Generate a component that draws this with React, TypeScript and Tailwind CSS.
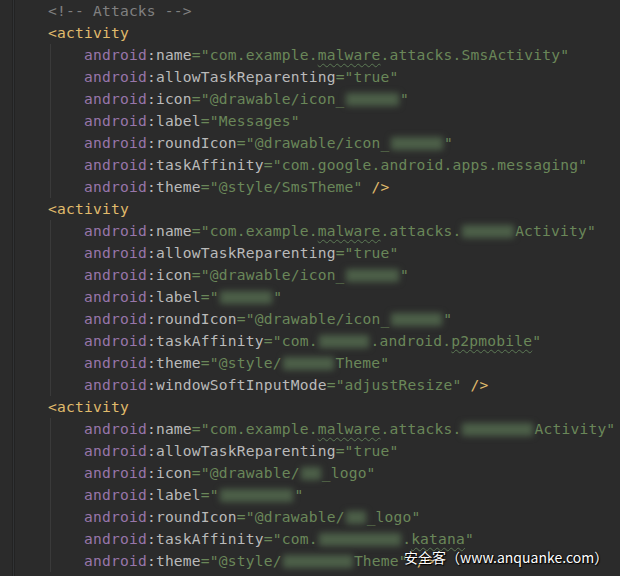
import React from 'react';

type Kind = 'ns' | 'attr' | 'str' | 'typo' | 'tag' | 'blob' | 'sp';
type Tok = [Kind, string | number];
type Line = Tok[];

const colors: Record<string, string> = {
  ns: 'text-[#9876aa]',
  attr: 'text-[#bababa]',
  str: 'text-[#6a8759]',
  tag: 'text-[#e0bb6c]',
};

// attribute line helper: android:<name>=<value tokens>
const at = (name: string, ...rest: Tok[]): Line => [
  ['ns', 'android'],
  ['attr', ':' + name],
  ...rest,
];

const close: Tok[] = [['sp', ' '], ['tag', '/>']];

// blob widths are in characters (8.8px each), the redacted bits of the screenshot
const blocks: Line[][] = [
  [
    at('name', ['str', '="com.example.'], ['typo', 'malware'], ['str', '.attacks.SmsActivity"']),
    at('allowTaskReparenting', ['str', '="true"']),
    at('icon', ['str', '="@drawable/icon_'], ['blob', 6.3], ['str', '"']),
    at('label', ['str', '="Messages"']),
    at('roundIcon', ['str', '="@drawable/icon_'], ['blob', 6.2], ['str', '"']),
    at('taskAffinity', ['str', '="com.google.android.apps.messaging"']),
    at('theme', ['str', '="@style/SmsTheme"'], ...close),
  ],
  [
    at('name', ['str', '="com.example.'], ['typo', 'malware'], ['str', '.attacks.'], ['blob', 6.1], ['str', 'Activity"']),
    at('allowTaskReparenting', ['str', '="true"']),
    at('icon', ['str', '="@drawable/icon_'], ['blob', 6.3], ['str', '"']),
    at('label', ['str', '="'], ['blob', 6.2], ['str', '"']),
    at('roundIcon', ['str', '="@drawable/icon_'], ['blob', 6.1], ['str', '"']),
    at('taskAffinity', ['str', '="com.'], ['blob', 6], ['str', '.android.'], ['typo', 'p2pmobile'], ['str', '"']),
    at('theme', ['str', '="@style/'], ['blob', 6.1], ['str', 'Theme"']),
    at('windowSoftInputMode', ['str', '="adjustResize"'], ...close),
  ],
  [
    at('name', ['str', '="com.example.'], ['typo', 'malware'], ['str', '.attacks.'], ['blob', 8.3], ['str', 'Activity"']),
    at('allowTaskReparenting', ['str', '="true"']),
    at('icon', ['str', '="@drawable/'], ['blob', 2.5], ['str', '_logo"']),
    at('label', ['str', '="'], ['blob', 8.6], ['str', '"']),
    at('roundIcon', ['str', '="@drawable/'], ['blob', 2.5], ['str', '_logo"']),
    at('taskAffinity', ['str', '="com.'], ['blob', 9.6], ['str', '.'], ['typo', 'katana'], ['str', '"']),
    at('theme', ['str', '="@style/'], ['blob', 8.2], ['str', 'Theme"'], ...close),
  ],
];

function Token({ tok }: { tok: Tok }) {
  const [kind, val] = tok;
  if (kind === 'blob') {
    return (
      <span className="relative inline-block h-[22px] align-top" style={{ width: `${(val as number) * 8.8}px` }}>
        <span className="absolute left-[1px] right-[1px] top-[5px] h-[13px] bg-[#4c5f48] blur-[3px]" />
      </span>
    );
  }
  if (kind === 'sp') return <span>{val}</span>;
  if (kind === 'typo') {
    return (
      <span className="text-[#6a8759] underline decoration-wavy decoration-[#5d7a55] decoration-1 underline-offset-[3px]">
        {val}
      </span>
    );
  }
  return <span className={colors[kind]}>{val}</span>;
}

function CodeLine({ line }: { line: Line }) {
  return (
    <div className="h-[22px] whitespace-pre">
      {line.map((t, i) => (
        <Token key={i} tok={t} />
      ))}
    </div>
  );
}

export default function App() {
  return (
    <div className="relative flex h-[576px] w-[620px] overflow-hidden bg-[#2b2b2b]">
      {/* gutter edge */}
      <div className="w-[12px] shrink-0" />
      <div className="w-[3px] shrink-0 border-x border-[#232323] bg-[#313335]" />

      <div
        className="flex-1 pl-[33px] text-[14.6px] leading-[22px] tracking-[0.2px]"
        style={{ fontFamily: '"DejaVu Sans Mono", "Liberation Mono", monospace' }}
      >
        <div className="h-[22px] whitespace-pre text-[#808080]">{'<!-- Attacks -->'}</div>
        {blocks.map((block, bi) => (
          <div key={bi}>
            <div className="h-[22px] text-[#e0bb6c]">{'<activity'}</div>
            <div className="ml-[2px] border-l border-[#3a3a3a] pl-[33px]">
              {block.map((line, li) => (
                <CodeLine key={li} line={line} />
              ))}
            </div>
          </div>
        ))}
      </div>

      {/* watermark */}
      <div
        className="absolute left-[404px] top-[546px] whitespace-pre text-[14px] leading-[22px] text-white [text-shadow:0_0_2px_#000,1px_1px_1px_#000]"
        style={{ fontFamily: '"Noto Sans CJK SC", "Noto Sans", sans-serif' }}
      >
        安全客（www.anquanke.com）
      </div>
    </div>
  );
}
